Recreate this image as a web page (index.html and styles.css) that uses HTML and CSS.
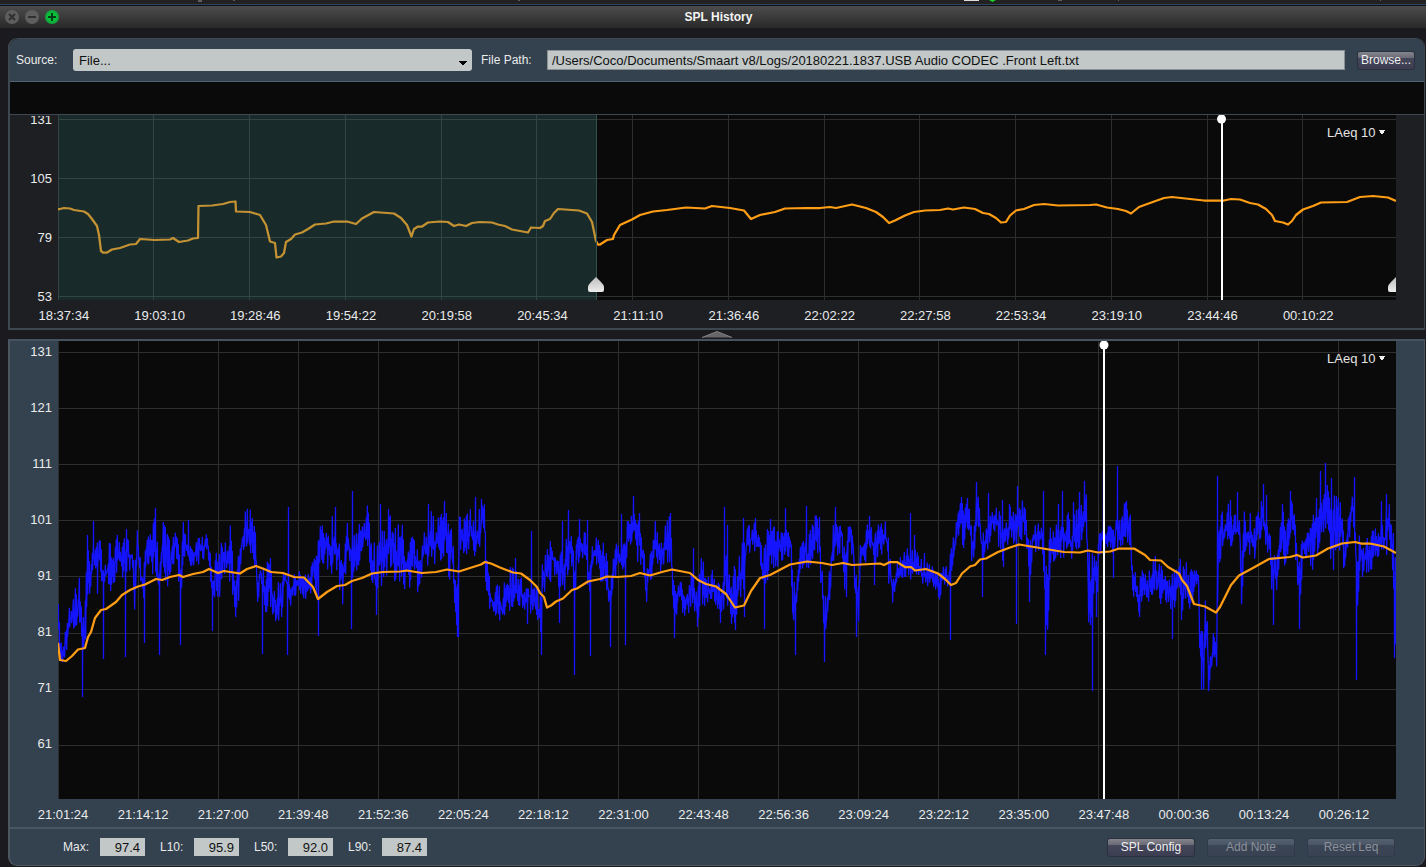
FILE: index.html
```html
<!DOCTYPE html>
<html lang="en">

<head>
  <meta charset="utf-8">
  <meta name="viewport" content="width=device-width, initial-scale=1">
  <title>SPL History</title>
  <link rel="stylesheet" href="styles.css">
</head>

<body>
  <!-- Slice of the desktop above the window -->
  <div class="desktop-edge">
    <svg width="1426" height="4" viewBox="0 0 1426 4">
      <path d="M198 1h4M233 0h2M518 0h2M1058 0h4M1118 0h1M1380 0h1" stroke="#999" stroke-width="1" />
      <path d="M964 0h15" stroke="#ddd" stroke-width="2" />
      <path d="M989 0h7l-3.500 2z" fill="#1fd42b" />
    </svg>
  </div>

  <header class="titlebar">
    <div class="window-buttons">
      <button type="button" aria-label="Close">
        <svg width="14" height="14" viewBox="0 0 14 14"><circle cx="7" cy="7" r="7" fill="#5e5e5e" /><path d="M4 4l6 6M10 4l-6 6" stroke="#303030" stroke-width="2" /></svg>
      </button>
      <button type="button" aria-label="Minimize">
        <svg width="14" height="14" viewBox="0 0 14 14"><circle cx="7" cy="7" r="7" fill="#5e5e5e" /><path d="M3 7h8" stroke="#303030" stroke-width="2" /></svg>
      </button>
      <button type="button" aria-label="Zoom">
        <svg width="14" height="14" viewBox="0 0 14 14"><circle cx="7" cy="7" r="7" fill="#12a83c" /><circle cx="7" cy="7" r="5" fill="#08c43c" /><path d="M3 7h8M7 3v8" stroke="#073d14" stroke-width="2" /></svg>
      </button>
    </div>
    <h1>SPL History</h1>
  </header>

  <main>
    <section class="panel overview">
      <form class="source-bar">
        <label for="source">Source:</label>
        <select id="source" class="source-select">
          <option>File...</option>
        </select>
        <label for="path" class="path-label">File Path:</label>
        <input type="text" id="path" class="path-input" value="/Users/Coco/Documents/Smaart v8/Logs/20180221.1837.USB Audio CODEC .Front Left.txt">
        <button type="button" class="btn browse">Browse...</button>
      </form>

      <div class="notes-strip"></div>

      <div class="chart">
        <div class="y-axis overview-y">
          <span>131</span><span>105</span><span>79</span><span>53</span>
        </div>
        <div class="plot overview-plot">
          <svg id="overview" viewBox="58 115 1338 185" preserveAspectRatio="none">
            <defs>
              <linearGradient id="handle" x1="0" y1="0" x2="0" y2="1">
                <stop offset="0" stop-color="#bdbdbd" />
                <stop offset="1" stop-color="#ececec" />
              </linearGradient>
            </defs>
            <rect x="58" y="115" width="1338" height="185" fill="#0a0a0a" />
            <g class="grid"></g>
            <polyline class="leq" />
            <rect class="outside" x="58" y="115" width="538" height="185" />
            <path d="M596.500 115v185" stroke="#33514f" />
            <path d="M596 277l5 5q3 3 3 5v3q0 2 -2 2h-12q-2 0 -2 -2v-3q0 -2 3 -5z" fill="url(#handle)" />
            <path d="M1396 277l5 5q3 3 3 5v3q0 2 -2 2h-12q-2 0 -2 -2v-3q0 -2 3 -5z" fill="url(#handle)" />
            <path class="cursor" d="M1222 119v181" />
            <circle cx="1221.500" cy="119" r="4.500" fill="#fff" />
          </svg>
          <select class="trace-select" aria-label="Overview trace">
            <option>LAeq 10</option>
          </select>
        </div>
      </div>
      <div class="x-axis overview-x">
        <span>18:37:34</span><span>19:03:10</span><span>19:28:46</span><span>19:54:22</span><span>20:19:58</span><span>20:45:34</span><span>21:11:10</span><span>21:36:46</span><span>22:02:22</span><span>22:27:58</span><span>22:53:34</span><span>23:19:10</span><span>23:44:46</span><span>00:10:22</span>
      </div>
    </section>

    <button type="button" class="collapse" aria-label="Hide overview">
      <svg width="30" height="7" viewBox="0 0 30 7"><path d="M0 6.500L15 0.500L30 6.500z" fill="#666568" /><path d="M0 6.500L15 0.500L30 6.500" fill="none" stroke="#858488" /></svg>
    </button>

    <section class="panel detail">
      <div class="chart">
        <div class="y-axis detail-y">
          <span>131</span><span>121</span><span>111</span><span>101</span><span>91</span><span>81</span><span>71</span><span>61</span>
        </div>
        <div class="plot detail-plot">
          <svg id="detail" viewBox="58 341 1338 458" preserveAspectRatio="none">
            <rect x="58" y="341" width="1338" height="458" fill="#0a0a0a" />
            <g class="grid"></g>
            <polyline class="spl" />
            <polyline class="leq" />
            <path class="cursor" d="M1104 345v454" />
            <circle cx="1104" cy="345" r="4.500" fill="#fff" />
          </svg>
          <select class="trace-select" aria-label="Detail trace">
            <option>LAeq 10</option>
          </select>
        </div>
      </div>
      <div class="x-axis detail-x">
        <span>21:01:24</span><span>21:14:12</span><span>21:27:00</span><span>21:39:48</span><span>21:52:36</span><span>22:05:24</span><span>22:18:12</span><span>22:31:00</span><span>22:43:48</span><span>22:56:36</span><span>23:09:24</span><span>23:22:12</span><span>23:35:00</span><span>23:47:48</span><span>00:00:36</span><span>00:13:24</span><span>00:26:12</span>
      </div>

      <div class="footer">
        <div class="stats">
          <label for="max">Max:</label><input type="text" id="max" value="97.4" readonly>
          <label for="l10">L10:</label><input type="text" id="l10" value="95.9" readonly>
          <label for="l50">L50:</label><input type="text" id="l50" value="92.0" readonly>
          <label for="l90">L90:</label><input type="text" id="l90" value="87.4" readonly>
        </div>
        <div class="actions">
          <button type="button" class="btn">SPL Config</button>
          <button type="button" class="btn" disabled>Add Note</button>
          <button type="button" class="btn" disabled>Reset Leq</button>
        </div>
      </div>
    </section>
  </main>
  <script src="charts.js"></script>
</body>

</html>
```

FILE: styles.css
```css
* {
  box-sizing: border-box;
}

body {
  margin: 0;
  background-color: #1b1a1f;
  color: #e9ebec;
  font-family: "Liberation Sans", Arial, Helvetica, sans-serif;
  font-size: 12px;
}

button,
input,
select {
  font-family: inherit;
  font-size: 13px;
  margin: 0;
}

.desktop-edge {
  height: 5px;
  overflow: hidden;
  background-color: #222;
  border-bottom: 1px solid #2b4663;
}

.desktop-edge svg {
  display: block;
}

/* Title bar */
.titlebar {
  display: grid;
  grid-template-columns: 1fr auto 1fr;
  align-items: center;
  height: 23px;
  padding: 0 0 0 5px;
  border-top: 1px solid #111;
  background: linear-gradient(#4c4c4c, #292929);
}

.titlebar h1 {
  margin: 0;
  padding-left: 6px;
  font-size: 12px;
  color: #f4f4f4;
}

.window-buttons {
  display: flex;
  gap: 6px;
}

.window-buttons button {
  display: flex;
  padding: 0;
  border: none;
  background: none;
}

main {
  padding: 10px 1px 0 8px;
}

.panel {
  border: 1px solid #4b565f;
  border-left-width: 2px;
}

.overview {
  background-color: #1e1f23;
  border-color: #3c4750;
  border-radius: 9px 9px 0 0;
  border-bottom-width: 2px;
}

.detail {
  background-color: #34414e;
  border-top: 2px solid #45525f;
  border-radius: 0 0 9px 9px;
}

/* Source row */
.source-bar {
  display: grid;
  grid-template-columns: 57px 1fr 75px 2fr 70px;
  align-items: center;
  height: 43px;
  padding: 0 9px 0 6px;
  background-color: #34414e;
  border-bottom: 1px solid #4f6070;
  border-radius: 8px 8px 0 0;
}

.path-label {
  padding-left: 9px;
}

.source-select {
  width: 100%;
  min-width: 0;
  height: 22px;
  padding: 0 6px;
  border: none;
  border-radius: 3px;
  appearance: none;
  color: #111;
  background-color: #c2c8c8;
  background-image: linear-gradient(to bottom left, #000 50%, transparent 51%), linear-gradient(to bottom right, #000 50%, transparent 51%);
  background-size: 4px 4px;
  background-position: right 9px bottom 6px, right 5px bottom 6px;
  background-repeat: no-repeat;
}

.path-input {
  width: 100%;
  min-width: 0;
  height: 20px;
  padding: 0 4px;
  border: 1px solid #8b9192;
  color: #111;
  background-color: #c2c8c8;
}

.btn {
  width: 88px;
  height: 19px;
  padding: 0;
  border: 1px solid #2b303d;
  border-radius: 3px;
  font-size: 12px;
  color: #f0f0f2;
  background: linear-gradient(#85858e, #686974 36%, #44465a 38%, #3c3d51);
}

.btn:disabled {
  color: #8b919b;
  border-color: #303a48;
  background: linear-gradient(#556070, #4a5564 36%, #3c4555 38%, #394252);
}

.browse {
  width: 58px;
  margin-left: 12px;
}

.notes-strip {
  height: 33px;
  background-color: #0a0a0a;
  border-bottom: 1px solid #3e4852;
}

/* Charts */
.chart {
  display: flex;
  padding-right: 28px;
}

.plot {
  position: relative;
  flex: 1;
  min-width: 0;
}

.plot svg {
  display: block;
  width: 100%;
  height: 100%;
}

.overview-plot,
.overview-y {
  height: 185px;
}

.detail-plot,
.detail-y {
  height: 458px;
}

.y-axis {
  display: flex;
  flex-direction: column;
  width: 48px;
  padding-right: 6px;
  text-align: right;
  font-size: 13px;
}

/* first label is cut by the strip above */
.overview-y {
  justify-content: center;
  clip-path: inset(1px 0 -8px 0);
}

.overview-y span {
  flex: none;
  line-height: 59px;
}

.detail-y span {
  flex: none;
  line-height: 56px;
}

.detail-y span:first-child {
  margin-top: -17px;
}

.x-axis {
  display: flex;
  height: 28px;
  font-size: 13px;
  line-height: 32px;
  text-align: center;
}

.x-axis span {
  flex: 1 1 0;
}

.overview-x {
  padding: 0 68px 0 6px;
}

.detail-x {
  padding: 0 40px 0 13px;
}

.trace-select {
  position: absolute;
  top: 10px;
  right: 10px;
  padding: 0 10px 0 0;
  border: none;
  appearance: none;
  color: #e4e4e4;
  background-color: transparent;
  background-image: linear-gradient(to bottom left, #eee 50%, transparent 51%), linear-gradient(to bottom right, #eee 50%, transparent 51%);
  background-size: 3px 5px;
  background-position: right 4px center, right 1px center;
  background-repeat: no-repeat;
}

.grid path {
  stroke: #2e2e2e;
}

.leq {
  fill: none;
  stroke: #ff9d15;
  stroke-width: 2.25;
  stroke-linejoin: round;
}

.spl {
  fill: none;
  stroke: #1414ff;
  stroke-width: 1.3;
  stroke-linejoin: bevel;
}

.outside {
  fill: #3a7a78;
  fill-opacity: 0.3;
}

.cursor {
  stroke: #fff;
  stroke-width: 2;
}

.collapse {
  display: flex;
  justify-content: center;
  width: 100%;
  height: 9px;
  padding: 1px 0 0;
  border: none;
  background: none;
}

/* Bottom row */
.footer {
  display: flex;
  align-items: center;
  justify-content: space-between;
  height: 38px;
  padding: 0 29px 0 53px;
  border-top: 2px solid #485562;
}

.stats {
  display: flex;
  align-items: center;
}

.stats label {
  width: 34px;
}

.stats label:first-child {
  width: 37px;
}

.stats input {
  width: 45px;
  height: 18px;
  margin-right: 15px;
  padding: 0 5px;
  border: none;
  text-align: right;
  color: #111;
  background-color: #c2c8c8;
}

.actions {
  display: flex;
  gap: 12px;
}
```

FILE: charts.js
```js
// LAeq 10 over the whole log, x y pairs
var overviewLeq = "58,209 60,209 64,208 70,208.5 74,210 84,211.5 88,214 92,219 97,226 99,235 101,251 103,252.5 107,252.5 112,249.5 120,248 130,244.5 136,244 140,239 155,240 170,239.5 173,238 179,242 188,240.5 193,238.5 198,238 198.500,206 212,205.5 223,204 230,202 235.5,201.5 236,211.5 250,212 260,215 266,225 270,241.5 275,243 276.5,257.5 281,256.5 284,253 286,242 291,239 295,234.5 302,232.5 308,229 315,224.5 326,223.5 334,221.5 347,221.5 356,224 362,218.5 374,212 394,213.5 401,218 407,225 411.5,236.5 414,229 418,226.5 422,226.5 428,222.5 440,221.5 448,222 454,226 459,224.5 466,226 472,223 480,222 492,222.5 498,224.5 505,226 512,229.5 528,232.5 531,227.5 540,228 543,226 545,221 550,219 554,213 558,209 579,210.5 587,213.5 592,222 596,241 598,244.5 600,244.5 607,240 613,239 614,235 620,225 632,219.5 640,215 653,211.5 667,210 686,207.5 705,208.5 712,206 730,208 744,210.5 751,219 760,215 775,212 785,208.5 806,208 820,208 830,207 836,208 852,204.5 866,208 876,212 883,217 889,223 895,220.5 905,215.5 914,212 925,210.5 940,210 948,208.5 953,209.5 964,207.5 975,209 983,213 989,214 996,218 1001,222.5 1006,222 1010,215.5 1016,210.5 1024,209 1034,205 1044,204 1058,205.5 1090,205 1096,204.5 1107,207.5 1118,209 1126,211 1131,213.5 1139,207 1150,203 1164,198 1172,197 1190,199 1204,200.5 1224,200.5 1231,199 1240,199.5 1250,203 1258,204.5 1266,209 1272,215 1275,221 1283,222.5 1288,224.5 1292,221 1296,215 1303,209.5 1313,206 1321,202.5 1347,202 1360,197 1373,196 1388,197.5 1396,201";

// LAeq 10 inside the selected range
var detailLeq = "58,643 60,660 66,661 72,656 78,649.5 85,648 88,637 91,632 95,618 101,610 106,609 116,602 122,595 130,590 138,586.5 145,584.5 156,579 162,580 170,577 179,575 183,577 193,574 203,572 209,569 218,573 224,571 240,573.5 247,569 256,566 264,569 271,572 283,573 294,577 304,577.5 313,587 318,599 327,592 337,586 345,585 352,581 362,578 372,573.5 383,572 400,571.5 407,570.5 422,573 436,572 447,569.5 459,571.5 470,568 481,564.5 485,562 491,563.5 500,567.5 513,572.5 521,573.5 530,580 537,587 540,593 544,597 547,607.5 551,605.5 556,601.5 563,598.5 572,590 577,588.5 588,581.5 600,579 607,576.5 617,577 631,576 640,573 650,575.5 662,572 672,569.5 690,573 698,580 706,584 716,586.5 726,594 735,607.5 744,605.5 751,591 760,578 770,575 790,564.5 807,561.5 822,563 832,565 843,563 852,565 880,563.5 884,565 890,562 897,562 905,567 911,567 915,570.5 926,569 938,573.5 945,579 951,585 956,583 962,573.5 970,566.5 975,565 980,559.5 986,558.5 998,552 1010,547.5 1019,544.5 1031,546.5 1046,549 1064,552 1080,552.5 1088,550.5 1098,552.5 1110,551.5 1119,548.5 1134,548.5 1145,555 1150,560 1161,560.5 1168,567 1179,573.5 1182,580 1187,586 1194,604 1205,606.5 1216,612.5 1220,607 1225,597 1231,585 1239,575.5 1252,568.5 1269,559 1290,557 1297,555 1303,557.5 1316,555.5 1328,548.5 1342,543.5 1355,542 1361,543.5 1370,543.5 1384,546.5 1396,553";

// SPL envelope: x, top, bottom
var envelope = [
  [58, 610, 650], [61, 640, 675], [64, 640, 655], [67, 615, 640], [70, 610, 625], [72, 598, 633], [75, 590, 628], [79, 582, 625], [82, 612, 640], [84, 612, 668], [86, 566, 610], [88, 545, 595], [90, 548, 596], [93, 540, 568], [96, 540, 568], [100, 545, 575], [104, 575, 582], [108, 550, 585], [112, 545, 585], [118, 540, 578], [120, 555, 570], [123, 543, 580],
  [127, 543, 562], [132, 545, 570], [134, 575, 615], [137, 530, 550], [140, 560, 580], [142, 565, 610], [146, 540, 560], [150, 524, 565], [155, 515, 575], [158, 560, 610], [160, 547, 575], [163, 527, 565], [168, 535, 590], [172, 545, 565], [176, 533, 555], [180, 560, 600], [183, 528, 550], [188, 548, 562], [193, 542, 575], [198, 537, 560], [203, 540, 555], [207, 528, 550], [210, 550, 580], [213, 580, 602],
  [215, 560, 585], [219, 555, 597], [222, 540, 565], [227, 540, 580], [230, 530, 578], [233, 558, 605], [236, 560, 617], [238, 522, 600], [241, 537, 555], [245, 515, 540], [250, 510, 548], [255, 536, 566], [257, 580, 607], [260, 563, 583], [265, 578, 617], [268, 560, 595], [273, 588, 613], [277, 590, 618], [281, 580, 620], [284, 570, 585], [290, 578, 603], [295, 580, 590], [300, 572, 595], [305, 575, 598],
  [310, 575, 590], [313, 557, 575], [316, 558, 590], [320, 530, 560], [325, 526, 565], [330, 518, 570], [335, 520, 565], [340, 545, 590], [343, 545, 605], [347, 520, 545], [351, 540, 580], [355, 540, 575], [360, 525, 562], [367, 510, 548], [371, 542, 578], [375, 550, 610], [378, 545, 570], [385, 525, 575], [390, 515, 575], [395, 528, 580], [400, 525, 575], [403, 530, 583], [408, 550, 587], [413, 538, 560],
  [417, 550, 595], [420, 552, 586], [424, 532, 570], [430, 515, 560], [435, 525, 558], [440, 520, 568], [444, 510, 545], [448, 525, 575], [452, 530, 575], [454, 565, 605], [457, 590, 635], [459, 522, 545], [465, 518, 550], [470, 512, 545], [474, 528, 556], [479, 515, 550], [482, 503, 530], [484, 510, 538], [485, 538, 595], [488, 575, 600], [492, 595, 613], [497, 590, 608], [502, 595, 626], [507, 575, 605],
  [510, 572, 605], [515, 575, 608], [520, 580, 600], [525, 592, 605], [529, 585, 610], [533, 585, 605], [537, 590, 615], [540, 600, 645], [542, 560, 590], [545, 558, 585], [548, 550, 582], [552, 540, 575], [556, 550, 580], [560, 555, 590], [564, 550, 587], [570, 535, 560], [574, 560, 600], [577, 538, 558], [585, 538, 558], [589, 560, 600], [593, 540, 565], [598, 542, 575], [605, 550, 580], [607, 565, 610],
  [610, 570, 620], [613, 545, 575], [618, 545, 565], [623, 550, 570], [627, 522, 550], [633, 518, 540], [638, 513, 560], [642, 540, 560], [646, 575, 600], [650, 550, 580], [655, 525, 570], [660, 535, 570], [665, 530, 560], [670, 520, 560], [672, 560, 590], [674, 580, 630], [677, 580, 605], [683, 590, 612], [688, 585, 610], [692, 565, 605], [697, 600, 625], [700, 565, 600], [702, 562, 600], [707, 585, 600],
  [712, 575, 600], [717, 590, 610], [722, 580, 605], [725, 550, 600], [730, 585, 615], [734, 565, 625], [738, 565, 600], [743, 540, 600], [747, 530, 545], [752, 530, 550], [756, 520, 545], [760, 545, 560], [763, 560, 590], [767, 530, 575], [770, 530, 565], [775, 532, 565], [780, 535, 560], [785, 535, 555], [790, 530, 555], [793, 590, 640], [796, 570, 620], [799, 550, 570], [804, 540, 560], [808, 540, 570],
  [812, 525, 560], [818, 517, 545], [821, 550, 600], [824, 600, 655], [827, 600, 625], [830, 555, 590], [834, 520, 550], [838, 530, 550], [841, 521, 545], [844, 550, 590], [849, 521, 545], [853, 535, 560], [855, 560, 620], [858, 580, 628], [860, 548, 565], [865, 535, 560], [869, 520, 545], [873, 540, 560], [876, 524, 560], [880, 530, 555], [885, 520, 545], [888, 540, 580], [892, 580, 599], [897, 565, 580],
  [902, 560, 573], [906, 553, 570], [912, 550, 580], [918, 560, 575], [923, 565, 585], [930, 570, 580], [935, 570, 585], [938, 580, 597], [943, 565, 585], [948, 575, 585], [951, 550, 565], [954, 540, 560], [957, 517, 530], [960, 497, 530], [963, 515, 550], [967, 500, 530], [970, 510, 555], [973, 540, 558], [976, 490, 525], [979, 490, 530], [982, 540, 575], [985, 535, 550], [990, 510, 535], [995, 505, 535],
  [999, 512, 545], [1002, 530, 555], [1005, 530, 545], [1010, 510, 530], [1014, 520, 545], [1019, 505, 540], [1024, 503, 530], [1029, 540, 590], [1032, 535, 552], [1037, 520, 545], [1042, 520, 550], [1045, 560, 620], [1047, 575, 630], [1050, 530, 560], [1055, 535, 555], [1058, 520, 555], [1062, 520, 555], [1065, 530, 550], [1068, 512, 540], [1070, 535, 560], [1073, 520, 540], [1079, 510, 550], [1083, 500, 525],
  [1086, 500, 540], [1088, 560, 620], [1092, 550, 640], [1094, 550, 580], [1096, 560, 610], [1099, 530, 550], [1103, 525, 545], [1108, 530, 545], [1112, 530, 550], [1117, 510, 548], [1120, 530, 548], [1124, 505, 535], [1130, 520, 545], [1132, 560, 592], [1135, 575, 598], [1139, 585, 612], [1142, 575, 590], [1147, 575, 600], [1152, 570, 600], [1155, 558, 585], [1160, 570, 600], [1165, 575, 600], [1170, 580, 610],
  [1175, 575, 600], [1179, 558, 585], [1182, 575, 615], [1185, 565, 600], [1190, 575, 610], [1195, 575, 590], [1198, 570, 580], [1199, 620, 660], [1203, 635, 690], [1205, 592, 650], [1207, 620, 645], [1208, 650, 690], [1211, 640, 680], [1213, 625, 665], [1216, 640, 680], [1218, 520, 560], [1224, 515, 548], [1230, 505, 545], [1235, 520, 545], [1239, 520, 545], [1241, 560, 600], [1244, 510, 560], [1250, 515, 550],
  [1255, 530, 565], [1258, 507, 545], [1263, 500, 535], [1268, 525, 550], [1272, 550, 600], [1277, 560, 580], [1281, 515, 545], [1285, 520, 570], [1290, 505, 530], [1294, 508, 540], [1297, 550, 590], [1300, 560, 600], [1302, 540, 550], [1307, 530, 560], [1312, 520, 565], [1320, 510, 540], [1327, 490, 525], [1331, 510, 565], [1336, 495, 555], [1341, 510, 545], [1344, 545, 574], [1348, 510, 540], [1352, 497, 510],
  [1354, 500, 540], [1357, 560, 620], [1360, 530, 560], [1362, 550, 575], [1367, 535, 565], [1372, 530, 570], [1378, 525, 550], [1384, 520, 560], [1388, 510, 540], [1391, 504, 550], [1394, 550, 630], [1396, 518, 650]
];

// single peaks and drops that leave the envelope
var spikes = {
  82: 697, 87: 535, 93: 521, 97: 594, 103: 659, 125: 657, 126: 529, 144: 643, 155: 508, 159: 655, 180: 645, 188: 520, 212: 631, 262: 654, 270: 558, 287: 655, 288: 507, 318: 636, 335: 507, 351: 629, 352: 491, 376: 615, 380: 504, 381: 586, 388: 509, 428: 504, 444: 501, 457: 637, 475: 497, 481: 499, 458: 637, 515: 558, 527: 624, 531: 531, 541: 655,
  559: 623, 562: 521, 568: 510, 574: 675, 579: 519, 587: 520, 590: 656, 610: 647, 621: 514, 625: 645, 633: 496, 639: 513, 670: 513, 674: 638, 693: 548, 697: 627, 720: 623, 724: 507, 727: 525, 731: 624, 735: 630, 744: 617, 743: 518, 755: 518, 764: 629, 770: 519, 785: 508, 795: 655, 806: 506, 819: 517, 824: 662, 835: 507, 846: 597, 856: 637, 869: 516,
  874: 585, 910: 513, 914: 535, 924: 553, 938: 597, 950: 640, 961: 497, 967: 498, 976: 482, 982: 597, 988: 493, 1002: 500, 1003: 567, 1009: 504, 1016: 624, 1017: 486, 1022: 503, 1029: 602, 1043: 491, 1045: 655, 1058: 504, 1062: 491, 1073: 502, 1079: 492, 1084: 481, 1090: 625, 1092: 691, 1096: 617, 1103: 470, 1113: 578, 1117: 466,
  1126: 501, 1139: 617, 1172: 639, 1181: 620, 1201: 690, 1208: 691, 1217: 476, 1230: 500, 1237: 492, 1241: 604, 1263: 484, 1266: 495, 1273: 625, 1282: 504, 1290: 491, 1299: 629, 1316: 498, 1320: 471, 1325: 463, 1331: 478, 1333: 570, 1354: 477, 1356: 680, 1362: 577, 1381: 501, 1386: 494, 1394: 658
};

var seed = 7;
function rnd() {
  seed = (seed * 16807) % 2147483647;
  return seed / 2147483647;
}

function splPoints() {
  var pts = [];
  for (var i = 0; i < envelope.length - 1; i++) {
    var a = envelope[i], b = envelope[i + 1];
    for (var x = a[0]; x < b[0]; x++) {
      var t = (x - a[0]) / (b[0] - a[0]);
      var top = a[1] + (b[1] - a[1]) * t;
      var bottom = a[2] + (b[2] - a[2]) * t;
      // a little overshoot keeps the trace ragged
      top -= 6;
      bottom += 6;
      var h = bottom - top;
      pts.push((x + 0.35) + "," + (top + h * rnd() * 0.55).toFixed(1));
      if (spikes[x]) pts.push((x + 0.5) + "," + spikes[x]);
      pts.push((x + 0.65) + "," + (bottom - h * rnd() * 0.55).toFixed(1));
    }
  }
  return pts.join(" ");
}

function grid(svg, x0, dx, cols, y0, dy, rows) {
  var box = svg.viewBox.baseVal;
  var d = "";
  for (var i = 0; i < cols; i++) d += "M" + (Math.floor(x0 + dx * i) + 0.5) + " " + box.y + "v" + box.height;
  for (var j = 0; j < rows; j++) d += "M" + box.x + " " + (Math.floor(y0 + dy * j) + 0.5) + "h" + box.width;
  svg.querySelector(".grid").innerHTML = '<path d="' + d + '" />';
}

var overview = document.getElementById("overview");
var detail = document.getElementById("detail");

grid(overview, 58, 95.75, 14, 119, 59, 4);
grid(detail, 58, 80.06, 17, 352, 56.2, 8);
overview.querySelector(".leq").setAttribute("points", overviewLeq);
detail.querySelector(".leq").setAttribute("points", detailLeq);
detail.querySelector(".spl").setAttribute("points", splPoints());
```
